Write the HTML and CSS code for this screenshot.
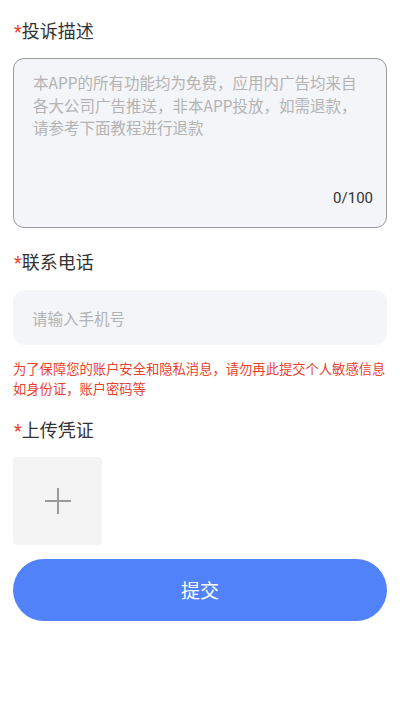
FILE: index.html
```html
<!DOCTYPE html>
<html lang="zh-CN">
<head>
<meta charset="utf-8">
<meta name="viewport" content="width=device-width, initial-scale=1">
<title>投诉</title>
<link rel="stylesheet" href="styles.css">
</head>
<body>
<div class="page">
  <div class="label label-first"><span class="star">*</span>投诉描述</div>
  <div class="textarea">
    <div class="placeholder">本APP的所有功能均为免费，应用内广告均来自<br>各大公司广告推送，非本APP投放，如需退款，<br>请参考下面教程进行退款</div>
    <div class="counter">0/100</div>
  </div>

  <div class="label label-second"><span class="star">*</span>联系电话</div>
  <div class="input"><span class="input-ph">请输入手机号</span></div>
  <div class="warning">为了保障您的账户安全和隐私消息，请勿再此提交个人敏感信息<br>如身份证，账户密码等</div>

  <div class="label label-third"><span class="star">*</span>上传凭证</div>
  <div class="upload">
    <svg width="28" height="28" viewBox="0 0 28 28" aria-hidden="true">
      <path d="M1 14H27M14 1V27" stroke="#9a9a9a" stroke-width="2" fill="none"/>
    </svg>
  </div>

  <button class="submit" type="button">提交</button>
</div>
</body>
</html>
```

FILE: styles.css
```css
* { box-sizing: border-box; }
html, body { margin: 0; padding: 0; background: #ffffff; }
body {
  font-family: Roboto, "Noto Sans CJK SC", sans-serif;
  color: #333333;
}
.page {
  padding: 20px 13px 0 13px;
  display: flex;
  flex-direction: column;
}
.label {
  font-size: 18px;
  line-height: 24px;
  height: 24px;
  color: #333333;
  padding-left: 1px;
}
.star { color: #e5432d; }
.label-first { margin-top: 0; }
.label-second { margin-top: 23px; }
.label-third { margin-top: 20px; }

.textarea {
  margin-top: 14px;
  height: 170px;
  border: 1px solid #9b9b9b;
  border-radius: 11px;
  background: #f4f5f8;
  padding: 12px 13px 20px 19px;
  display: flex;
  flex-direction: column;
  justify-content: space-between;
}
.placeholder {
  font-family: "Noto Sans CJK SC", sans-serif;
  font-size: 15.5px;
  line-height: 22.5px;
  color: #b3b3b3;
  white-space: nowrap;
}
.counter {
  align-self: flex-end;
  font-size: 15px;
  line-height: 18px;
  color: #333333;
}

.input {
  margin-top: 15px;
  height: 55px;
  border-radius: 12px;
  background: #f4f5f8;
  padding: 0 19px;
  display: flex;
  align-items: center;
}
.input-ph {
  font-family: "Noto Sans CJK SC", sans-serif;
  font-size: 15.5px;
  color: #b3b3b3;
}

.warning {
  margin-top: 13.5px;
  font-family: "Noto Sans CJK SC", sans-serif;
  font-size: 13.3px;
  line-height: 20px;
  color: #e5432d;
  white-space: nowrap;
}

.upload {
  margin-top: 14px;
  width: 89px;
  height: 88px;
  border-radius: 4px;
  background: #f4f4f4;
  display: flex;
  align-items: center;
  justify-content: center;
}

.submit {
  margin-top: 14px;
  height: 62px;
  width: 100%;
  border: none;
  border-radius: 31px;
  background: #5282fa;
  color: #ffffff;
  font-family: Roboto, "Noto Sans CJK SC", sans-serif;
  font-size: 19px;
  padding: 0;
}
```
